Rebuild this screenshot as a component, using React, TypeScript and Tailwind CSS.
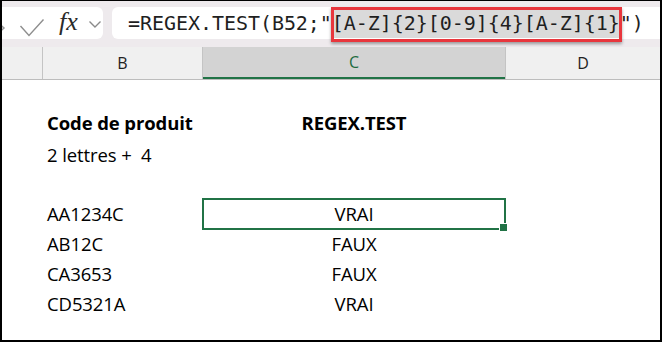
export default function App() {
  const rows = [
    { code: "AA1234C", result: "VRAI", selected: true },
    { code: "AB12C", result: "FAUX" },
    { code: "CA3653", result: "FAUX" },
    { code: "CD5321A", result: "VRAI" },
  ];

  return (
    <div className="w-[662px] h-[342px] overflow-hidden bg-white border-t border-l-2 border-r-2 border-b-2 border-black flex flex-col font-['Open_Sans',sans-serif] text-black">
      {/* formula bar */}
      <div className="h-[46px] shrink-0 bg-[#eeeaed] flex items-start pt-[6px] gap-[9px]">
        <div className="w-[101px] h-[32px] shrink-0 bg-white rounded-r-[6px] relative">
          <svg className="absolute left-[-8px] top-[12px]" width="12" height="18" viewBox="0 0 12 18">
            <path d="M1 1 L10 9 L1 17" fill="none" stroke="#9a9a9a" strokeWidth="1.5" />
          </svg>
          <svg className="absolute left-[17px] top-[11px]" width="26" height="20" viewBox="0 0 26 20">
            <path d="M1.5 8 L10 17.5 L24.5 1.5" fill="none" stroke="#8e8e8e" strokeWidth="1.4" />
          </svg>
          <span className="absolute left-[57px] top-[-1px] font-['Liberation_Serif',serif] italic text-[26px] leading-[32px] text-[#2a2a2a]">
            fx
          </span>
          <svg className="absolute left-[86px] top-[13px]" width="14" height="9" viewBox="0 0 14 9">
            <path d="M1.5 1.5 L7 7 L12.5 1.5" fill="none" stroke="#8a8a8a" strokeWidth="1.4" />
          </svg>
        </div>
        <div className="flex-1 h-[32px] bg-white rounded-l-[6px] pl-[16px] flex items-center font-['DejaVu_Sans_Mono',monospace] text-[20px] tracking-[-0.05px] text-[#1f1f1f] whitespace-pre">
          <span>=REGEX.TEST(B52;"</span>
          <span className="relative bg-[#dadada]">
            [A-Z]{"{2}"}[0-9]{"{4}"}[A-Z]{"{1}"}
            <span className="absolute left-[-1px] right-[-2px] top-[-1px] bottom-[-4px] border-[3px] border-[#e8363d] shadow-[0_2px_3px_rgba(0,0,0,0.35)]" />
          </span>
          <span>")</span>
        </div>
      </div>

      {/* column headers */}
      <div className="h-[33px] shrink-0 grid grid-cols-[41px_160px_302px_1fr] bg-[#f0f0f0] border-b border-[#bdbdbd] text-[16px] text-[#222]">
        <div className="border-r border-[#c4c4c4]" />
        <div className="border-r border-[#c4c4c4] flex items-center justify-center">B</div>
        <div className="bg-[#d3d3d3] border-b-2 border-[#217346] flex items-center justify-center text-[#1d6b40]">
          C
        </div>
        <div className="border-l border-[#c4c4c4] flex items-center justify-center">D</div>
      </div>

      {/* cells */}
      <div className="flex-1 grid grid-cols-[41px_160px_302px_1fr] auto-rows-min text-[18.5px] tracking-[-0.1px]">
        <div className="col-span-4 h-[27px]" />

        <div />
        <div className="h-[32px] flex items-center pl-[4px] font-bold whitespace-nowrap">Code de produit</div>
        <div className="h-[32px] flex items-center justify-center font-bold">REGEX.TEST</div>
        <div />

        <div />
        <div className="h-[31px] flex items-center pl-[4px] whitespace-pre">2 lettres +  4</div>
        <div />
        <div />

        <div className="col-span-4 h-[29px]" />

        {rows.map((r) => (
          <div key={r.code} className="contents">
            <div />
            <div className="h-[30px] flex items-center pl-[4px]">{r.code}</div>
            <div className="h-[30px] flex items-center justify-center relative">
              {r.result}
              {r.selected && (
                <>
                  <span className="absolute left-[-1px] right-[-1px] top-[-1px] bottom-[-1px] border-2 border-[#217346]" />
                  <span className="absolute right-[-3px] bottom-[-3px] w-[7px] h-[7px] bg-[#217346] border border-white box-content" />
                </>
              )}
            </div>
            <div />
          </div>
        ))}
      </div>
    </div>
  );
}
